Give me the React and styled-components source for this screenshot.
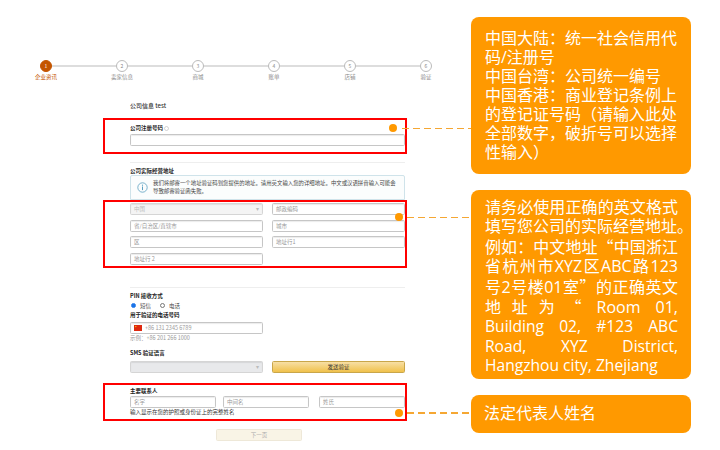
import React from 'react'
import styled, { createGlobalStyle } from 'styled-components'

const GlobalStyle = createGlobalStyle`
  html, body {
    margin: 0;
    background: #fff;
  }
  * {
    box-sizing: border-box;
  }
`

const Page = styled.div`
  width: 720px;
  height: 450px;
  overflow: hidden;
  display: flex;
  font-family: "Noto Sans CJK SC", "Noto Sans", sans-serif;
  color: #333;
`

const Left = styled.div`
  width: 471px;
  flex: none;
  padding-top: 60px;
`

const Stepper = styled.div`
  display: grid;
  grid-template-columns: repeat(6, 76px);
  margin-left: 8px;
`

const Step = styled.div`
  position: relative;
  display: flex;
  flex-direction: column;
  align-items: center;
  font-size: 5.5px;
  line-height: 8px;
  color: ${({ $active }) => ($active ? '#c45500' : '#888')};
  &::after {
    content: '';
    display: ${({ $last }) => ($last ? 'none' : 'block')};
    position: absolute;
    top: 5px;
    left: 50%;
    width: 100%;
    height: 1.5px;
    background: #ddd;
  }
`

const StepDot = styled.span`
  position: relative;
  z-index: 1;
  width: 12px;
  height: 12px;
  margin-bottom: 1px;
  border-radius: 50%;
  display: flex;
  align-items: center;
  justify-content: center;
  font-size: 5px;
  background: ${({ $active }) => ($active ? '#c45500' : '#fff')};
  color: ${({ $active }) => ($active ? '#fff' : '#888')};
  border: 1px solid ${({ $active }) => ($active ? '#c45500' : '#bbb')};
`

const Form = styled.div`
  width: 275px;
  margin-left: 130px;
  font-size: 5.5px;
  line-height: 8px;
`

const FormTitle = styled.div`
  margin-top: 21px;
  font-size: 6px;
  font-weight: 500;
  color: #333;
`

const Highlight = styled.div`
  position: relative;
  margin: ${({ $top }) => $top || 0}px -2px 0 -27px;
  padding: ${({ $pad }) => $pad};
  border: 2px solid #f00;
`

const Dot = styled.span`
  position: absolute;
  top: ${({ $top }) => $top}px;
  left: ${({ $left }) => $left}px;
  width: 8px;
  height: 8px;
  border-radius: 50%;
  background: #ff9900;
  z-index: 2;
`

const Dash = styled.span`
  position: absolute;
  top: ${({ $top }) => $top}px;
  left: ${({ $left }) => $left}px;
  width: ${({ $width }) => $width}px;
  height: 1.5px;
  background: repeating-linear-gradient(90deg, #f5a733 0 7px, transparent 7px 11px);
`

const Label = styled.div`
  font-weight: 700;
  color: #222;
  margin: ${({ $margin }) => $margin || '0'};
`

const Input = styled.div`
  height: 12px;
  padding-left: 3px;
  border: 1px solid #c6c6c6;
  border-radius: 1.5px;
  box-shadow: inset 0 1px 1px rgba(0, 0, 0, 0.08);
  background: #fff;
  color: #999;
  line-height: 10px;
  font-size: 5.5px;
  display: flex;
  align-items: center;
  gap: 3px;
`

const NameInput = styled(Input)`
  width: 86px;
`

const Select = styled(Input)`
  justify-content: space-between;
  padding-right: 3px;
  background: ${({ $light }) => ($light ? '#f4f4f4' : '#e8e9eb')};
  border-color: #d5d5d5;
  color: #bbb;
`

const Divider = styled.div`
  height: 1px;
  background: #eee;
  margin: ${({ $margin }) => $margin};
`

const Notice = styled.div`
  height: 25px;
  margin-top: 0;
  display: flex;
  align-items: center;
  gap: 5px;
  padding: 0 7px 0 6px;
  border: 1px solid #cfe3ea;
  border-radius: 2px 2px 0 0;
  background: #fbfdfd;
  color: #444;
  font-size: 5.4px;
  line-height: 7.5px;
`

const AddressGrid = styled.div`
  display: grid;
  grid-template-columns: 133px 133px;
  column-gap: 9px;
  row-gap: 4.6px;
`

const Radios = styled.div`
  display: flex;
  align-items: center;
  height: 8px;
  margin: 2px 0 1px;
  color: #444;
`

const Radio = styled.span`
  width: 5px;
  height: 5px;
  margin: 0 4px 0 ${({ $first }) => ($first ? '1px' : '9px')};
  border-radius: 50%;
  border: 0.5px solid ${({ $checked }) => ($checked ? '#1a73e8' : '#777')};
  background: ${({ $checked }) => ($checked ? 'radial-gradient(circle, #1a73e8 0 1.6px, #fff 1.7px)' : '#fff')};
`

const PhoneInput = styled(Input)`
  width: 133px;
  margin-top: 3px;
`

const Hint = styled.div`
  color: #999;
`

const SmsRow = styled.div`
  display: grid;
  grid-template-columns: 133px 133px;
  column-gap: 9px;
  margin-top: 4px;
`

const SendButton = styled.div`
  height: 12px;
  display: flex;
  align-items: center;
  justify-content: center;
  border: 1px solid #c9a64a;
  border-radius: 1.5px;
  background: linear-gradient(#f7dfa5, #f0c14b);
  color: #333;
`

const NameRow = styled.div`
  display: grid;
  grid-template-columns: 93px 96px 86px;
  margin-top: 1px;
`

const NextButton = styled.div`
  width: 86px;
  height: 12px;
  margin: 8px 0 0 86px;
  display: flex;
  align-items: center;
  justify-content: center;
  border: 1px solid #eee8d8;
  border-radius: 1.5px;
  background: #f9f4e6;
  color: #aaa;
`

const Right = styled.div`
  width: 220px;
  flex: none;
  padding-top: 17px;
  display: flex;
  flex-direction: column;
  gap: 16px;
`

const Callout = styled.div`
  height: ${({ $h }) => $h}px;
  padding: ${({ $pad }) => $pad};
  border-radius: 8px;
  background: #ff9900;
  color: #fff;
  font-family: "Open Sans", "Noto Sans CJK SC", sans-serif;
  font-size: 16px;
  line-height: ${({ $lh }) => $lh || 19}px;
`

const Line = styled.div`
  white-space: nowrap;
  text-align: ${({ $plain }) => ($plain ? 'left' : 'justify')};
  text-align-last: ${({ $plain }) => ($plain ? 'left' : 'justify')};
`

const LatinLine = styled(Line)`
  font-size: 15.6px;
`

const Quote = styled.span`
  font-family: "Noto Sans CJK SC", sans-serif;
`

const InfoIcon = () => (
  <svg width="11" height="11" viewBox="0 0 11 11" style={{ flex: 'none' }}>
    <circle cx="5.5" cy="5.5" r="4.7" fill="none" stroke="#5a9fc0" strokeWidth="0.8" />
    <circle cx="5.5" cy="3.2" r="0.6" fill="#5a9fc0" />
    <rect x="5" y="4.5" width="1" height="3.6" fill="#5a9fc0" />
  </svg>
)

const Flag = () => (
  <svg width="8" height="6" viewBox="0 0 8 6" style={{ flex: 'none' }}>
    <rect width="8" height="6" fill="#de2910" />
    <circle cx="1.8" cy="1.6" r="0.7" fill="#ffde00" />
  </svg>
)

const Help = () => (
  <svg width="5" height="5" viewBox="0 0 5 5" style={{ marginLeft: 1, verticalAlign: -0.5 }}>
    <circle cx="2.5" cy="2.5" r="2" fill="none" stroke="#aaa" strokeWidth="0.5" />
  </svg>
)

const steps = ['企业资讯', '卖家信息', '商城', '账单', '店铺', '验证']

export default function App() {
  return (
    <Page lang="zh-CN">
      <GlobalStyle />
      <Left>
        <Stepper>
          {steps.map((s, i) => (
            <Step key={s} $active={i === 0} $last={i === steps.length - 1}>
              <StepDot $active={i === 0}>{i + 1}</StepDot>
              {s}
            </Step>
          ))}
        </Stepper>
        <Form>
          <FormTitle>公司信息 test</FormTitle>
          <Highlight $top={8} $pad="4px 0 6px 25px">
            <Label $margin="0 0 2px">公司注册号码<Help /></Label>
            <Input />
            <Dot $top={4} $left={284} />
            <Dash $top={7.5} $left={297} $width={69} />
          </Highlight>

          <Divider $margin="8px 0 4px" />
          <Label>公司实际经营地址</Label>
          <Notice>
            <InfoIcon />
            <span>我们将邮寄一个地址验证码到您提供的地址。请用英文输入您的详细地址。中文或汉语拼音输入可能会导致邮寄验证函失败。</span>
          </Notice>
          <Highlight $pad="1px 0 1px 25px">
            <AddressGrid>
              <Select $light>中国<span>▾</span></Select>
              <Input>邮政编码</Input>
              <Input>省/自治区/直辖市</Input>
              <Input>城市</Input>
              <Input>区</Input>
              <Input>地址行1</Input>
              <Input>地址行 2</Input>
            </AddressGrid>
            <Dot $top={11} $left={290} />
            <Dash $top={14.5} $left={302} $width={64} />
          </Highlight>

          <Divider $margin="19px 0 4px" />
          <Label>PIN 接收方式</Label>
          <Radios>
            <Radio $first $checked />
            <span>短信</span>
            <Radio />
            <span>电话</span>
          </Radios>
          <Label>用于验证的电话号码</Label>
          <PhoneInput><Flag />+86 131 2345 6789</PhoneInput>
          <Hint>示例：+86 201 266 1000</Hint>
          <Label $margin="7px 0 0">SMS 验证语言</Label>
          <SmsRow>
            <Select>&nbsp;<span>▾</span></Select>
            <SendButton>发送验证</SendButton>
          </SmsRow>

          <Highlight $top={10} $pad="2px 0 3px 25px">
            <Label>主要联系人</Label>
            <NameRow>
              <NameInput>名字</NameInput>
              <NameInput>中间名</NameInput>
              <NameInput>姓氏</NameInput>
            </NameRow>
            <div>输入显示在您的护照或身份证上的完整姓名</div>
            <Dot $top={24} $left={290} />
            <Dash $top={27.5} $left={302} $width={64} />
          </Highlight>
          <NextButton>下一页</NextButton>
        </Form>
      </Left>
      <Right>
        <Callout $h={157} $pad="12px 13px 0 14px">
          中国大陆：统一社会信用代码/注册号<br />
          中国台湾：公司统一编号<br />
          中国香港：商业登记条例上的登记证号码（请输入此处全部数字，破折号可以选择性输入）
        </Callout>
        <Callout $h={189} $lh={19.4} $pad="8px 13px 0 14px">
          <Line>请务必使用正确的英文格式</Line>
          <Line $plain>填写您公司的实际经营地址。</Line>
          <Line>例如：中文地址<Quote>“</Quote>中国浙江</Line>
          <Line>省杭州市XYZ区ABC路123</Line>
          <Line>号2号楼01室<Quote>”</Quote>的正确英文</Line>
          <Line>地址为<Quote>“</Quote> Room 01,</Line>
          <LatinLine>Building 02, #123 ABC</LatinLine>
          <LatinLine>Road, XYZ District,</LatinLine>
          <LatinLine $plain>Hangzhou city, Zhejiang</LatinLine>
        </Callout>
        <Callout $h={38} $pad="9px 13px 0 13px">法定代表人姓名</Callout>
      </Right>
    </Page>
  )
}
